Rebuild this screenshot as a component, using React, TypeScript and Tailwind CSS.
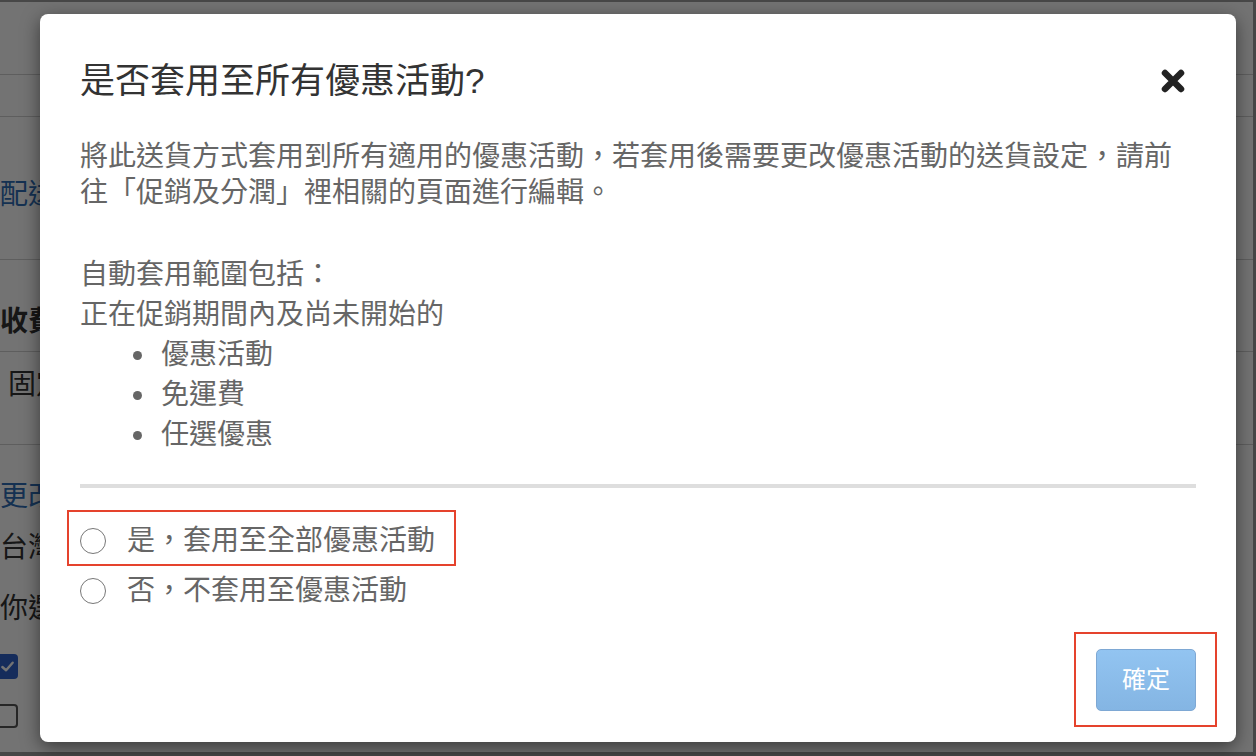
import React from "react";

const font = "font-['Liberation_Sans','Noto_Sans_CJK_TC','Noto_Sans',sans-serif]";

// only the left edge of the page shows beside the dialog
const Clip = ({ children }: { children: React.ReactNode }) => (
  <span className="block w-[40px] overflow-hidden whitespace-nowrap">{children}</span>
);

// page that sits behind the dialog
const BackgroundPage = () => (
  <div className="flex flex-col text-[28px] leading-[34px] text-[#333]">
    <div className="h-[75px] border-b border-[#d0d0d0]" />
    <div className="h-[42px] border-b border-[#d0d0d0]" />
    <div className="h-[143px] border-b border-[#d0d0d0] pt-[61px] text-[#2f6db5]">
      <Clip>配送方式設定</Clip>
    </div>
    <div className="h-[92px] border-b border-[#d0d0d0] pt-[45px] font-bold">
      <Clip>收費方式</Clip>
    </div>
    <div className="h-[93px] border-b border-[#d0d0d0] pt-[16px] pl-[8px]">
      <Clip>固定運費</Clip>
    </div>
    <div className="pt-[35px] text-[#2f6db5]">
      <Clip>更改配送地區</Clip>
    </div>
    <div className="mt-[17px]">
      <Clip>台灣本島</Clip>
    </div>
    <div className="mt-[27px]">
      <Clip>你選擇的配送方式</Clip>
    </div>
    <div className="mt-[28px] flex items-center">
      <span className="w-[22px] h-[25px] -ml-[4px] rounded-[4px] bg-[#2f62c9] flex items-center justify-center">
        <svg viewBox="0 0 16 16" className="w-[15px] h-[15px]">
          <path d="M2.5 8.5L6.5 12L13.5 4" fill="none" stroke="white" strokeWidth="2.6" strokeLinecap="round" strokeLinejoin="round" />
        </svg>
      </span>
    </div>
    <div className="mt-[25px] flex items-center">
      <span className="w-[22px] h-[24px] -ml-[4px] rounded-[4px] border-2 border-[#555] bg-white" />
    </div>
  </div>
);

const Radio = ({ label }: { label: string }) => (
  <label className="flex items-center h-[50px] cursor-pointer">
    <span className="w-[26px] h-[26px] rounded-full border-[1.5px] border-[#777] bg-white shrink-0" />
    <span className="ml-[21px] text-[28px] leading-[36px] text-[#666]">{label}</span>
  </label>
);

export default function App() {
  const items = ["優惠活動", "免運費", "任選優惠"];

  return (
    <div className={`relative w-[1256px] h-[756px] overflow-hidden bg-white ${font}`}>
      <BackgroundPage />

      {/* dim overlay */}
      <div className="absolute inset-0 bg-black/55 border-t-2 border-r-[3px] border-b-[4px] border-[#474747]" />

      {/* dialog */}
      <div className="absolute left-[40px] top-[14px] w-[1196px] h-[728px] bg-white rounded-lg shadow-[0_5px_18px_rgba(0,0,0,0.5)] flex flex-col px-[40px]">
        <div className="flex items-center justify-between pt-[47px]">
          <h2 className="text-[35px] leading-[40px] text-[#333] font-normal">是否套用至所有優惠活動?</h2>
          <button className="mr-[11px] w-6 h-6">
            <svg viewBox="0 0 24 24" className="w-6 h-6">
              <path d="M4 4L20 20M20 4L4 20" stroke="#222" strokeWidth="6.5" strokeLinecap="round" />
            </svg>
          </button>
        </div>

        <p className="mt-[38px] text-[28px] leading-[36px] text-[#666]">
          將此送貨方式套用到所有適用的優惠活動，若套用後需要更改優惠活動的送貨設定，請前往「促銷及分潤」裡相關的頁面進行編輯。
        </p>

        <div className="mt-[44px] text-[28px] leading-[40px] text-[#666]">
          <div>自動套用範圍包括：</div>
          <div>正在促銷期間內及尚未開始的</div>
          <ul>
            {items.map((item) => (
              <li key={item} className="flex items-center">
                <span className="ml-[53px] w-[9px] h-[9px] rounded-full bg-[#666]" />
                <span className="ml-[19px]">{item}</span>
              </li>
            ))}
          </ul>
        </div>

        <div className="mt-[29px] h-[4px] bg-[#dedede]" />

        <div className="mt-[28px] flex flex-col">
          <Radio label="是，套用至全部優惠活動" />
          <Radio label="否，不套用至優惠活動" />
        </div>

        <div className="mt-auto flex justify-end pb-[31px]">
          <button className="w-[100px] h-[62px] rounded-[5px] border border-[#7ea8d4] bg-gradient-to-b from-[#92c4f1] to-[#84b5e3] text-white text-[24px]">
            確定
          </button>
        </div>

        {/* annotation boxes */}
        <div className="absolute left-[27px] top-[496px] w-[389px] h-[56px] border-2 border-[#e5432d] pointer-events-none" />
        <div className="absolute left-[1034px] top-[618px] w-[143px] h-[95px] border-2 border-[#e5432d] pointer-events-none" />
      </div>
    </div>
  );
}
